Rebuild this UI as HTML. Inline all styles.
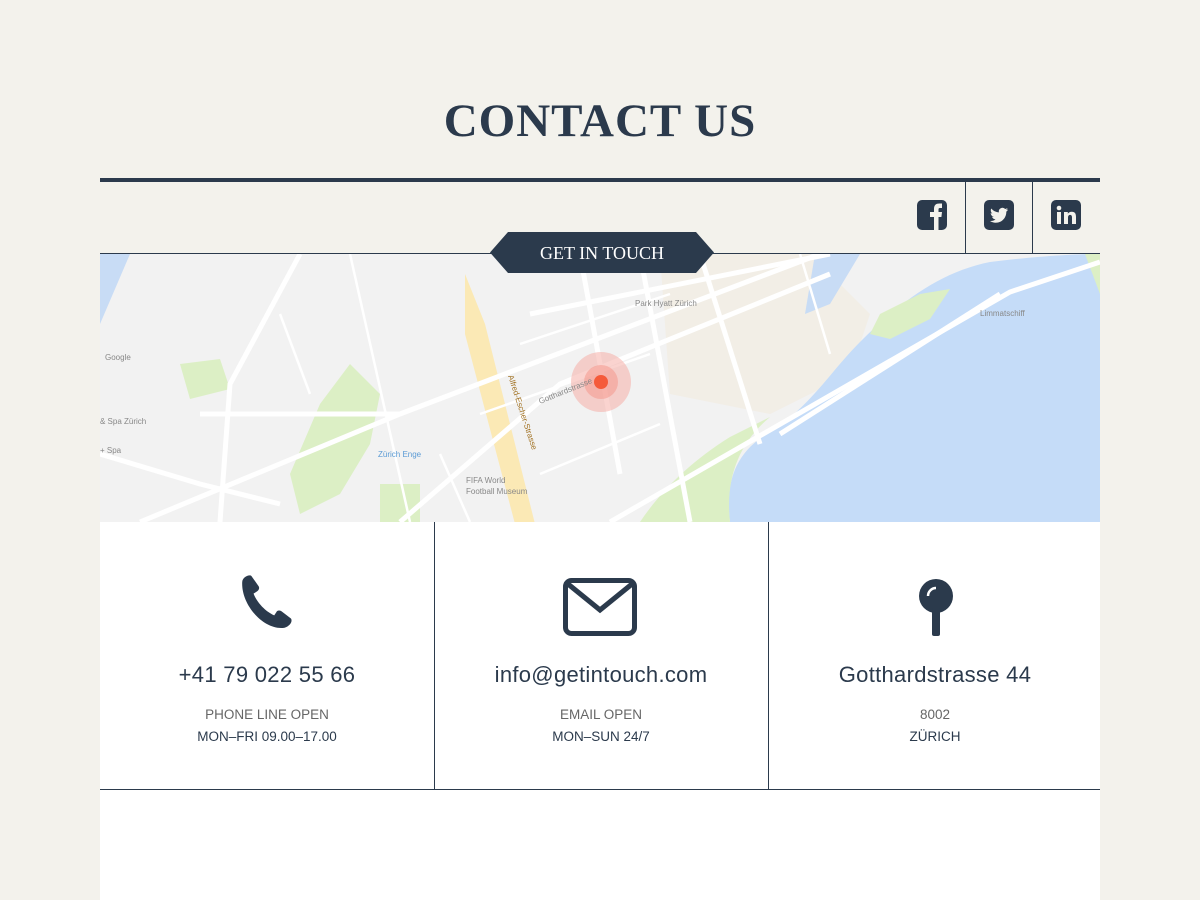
<!DOCTYPE html>
<html><head><meta charset="utf-8"><style>
body{margin:0;width:1200px;height:900px;background:#f3f2ec;font-family:"Liberation Sans",sans-serif;color:#2b3a4c;position:relative;overflow:hidden}
h1{position:absolute;top:94px;left:0;width:1200px;margin:0;text-align:center;font-family:"Liberation Serif",serif;font-size:47px;font-weight:bold;letter-spacing:1px;color:#2b3a4c}
.topline{position:absolute;left:100px;top:178px;width:1000px;height:4px;background:#2b3a4c}
.botline{position:absolute;left:100px;top:253px;width:1000px;height:1px;background:#2b3a4c}
.vd{position:absolute;top:182px;height:71px;width:1px;background:#2b3a4c}
.map{position:absolute;left:100px;top:254px;width:1000px;height:268px;overflow:hidden}
.panel{position:absolute;left:100px;top:522px;width:1000px;height:378px;background:#fff}
.col{position:absolute;top:0;width:334px;height:268px;text-align:center}
.big{position:absolute;top:140px;width:100%;font-size:22px;letter-spacing:.3px}
.s1{position:absolute;top:185px;width:100%;font-size:13.5px;color:#666}
.s2{position:absolute;top:207px;width:100%;font-size:13.5px;color:#2b3a4c}
</style></head><body>
<h1>CONTACT US</h1>
<div class="topline"></div>
<div class="vd" style="left:965px"></div><div class="vd" style="left:1032px"></div>
<svg style="position:absolute;left:917px;top:200px" width="30" height="30" viewBox="0 0 30 30"><rect width="30" height="30" rx="5" fill="#2b3a4c"/><path d="M17 30V17h-4v-5h4V9c0-4 2-5.5 5.5-5.5H25v4.5h-2c-1.2 0-1.5.6-1.5 1.6V12H25l-.6 5h-2.9v13z" fill="#f3f2ec"/></svg>
<svg style="position:absolute;left:984px;top:200px" width="30" height="30" viewBox="0 0 30 30"><rect width="30" height="30" rx="5" fill="#2b3a4c"/><path d="M24 9.5c-.7.3-1.4.5-2.1.6.8-.5 1.3-1.2 1.6-2-.7.4-1.5.7-2.3.9a3.7 3.7 0 0 0-6.3 3.4c-3-.2-5.7-1.6-7.6-3.9-1 1.7-.5 3.9 1.1 5-.6 0-1.2-.2-1.7-.5 0 1.8 1.3 3.3 3 3.7-.5.2-1.1.2-1.7.1.5 1.5 1.9 2.5 3.5 2.6A7.5 7.5 0 0 1 6 21c1.7 1.1 3.7 1.7 5.7 1.7 6.9 0 10.8-5.8 10.6-11.1.7-.5 1.3-1.2 1.7-1.9z" fill="#f3f2ec"/></svg>
<svg style="position:absolute;left:1051px;top:200px" width="30" height="30" viewBox="0 0 30 30"><rect width="30" height="30" rx="5" fill="#2b3a4c"/><rect x="6" y="12" width="4" height="12" fill="#f3f2ec"/><circle cx="8" cy="8" r="2.3" fill="#f3f2ec"/><path d="M13 12h3.8v1.8c.7-1.2 2-2.1 4-2.1 3 0 4.2 1.8 4.2 5V24h-4v-6.5c0-1.6-.5-2.6-1.9-2.6-1.4 0-2.1 1-2.1 2.6V24h-4z" fill="#f3f2ec"/></svg>
<div class="map"><svg width="1000" height="268" viewBox="0 0 1000 268">
<rect width="1000" height="268" fill="#f2f2f2"/>
<path d="M560 0h150l60 60-20 60-80 40-100-20z" fill="#f1ece2" opacity=".8"/>
<path d="M0 0h30L0 70z" fill="#c8dcf5"/>
<path d="M715 0h45l-30 50-25 10z" fill="#c8dcf5"/>
<path d="M1000 0V268H630c-5-40 5-70 40-90 40-25 60-60 90-90 40-40 80-70 130-80 40-5 80-8 110-8z" fill="#c5dcf8"/>
<path d="M540 268c20-30 50-60 90-85l40-20c-30 25-45 60-40 105z" fill="#dcefc5"/>
<path d="M780 60l40-20 30-5-20 30-40 20-20-5z" fill="#dcefc5"/>
<path d="M220 150l30-40 30 30-10 50-30 50-40 20-10-40z" fill="#dcefc5"/>
<path d="M80 110l40-5 10 30-40 10z" fill="#dcefc5"/>
<path d="M280 230h40v38h-40z" fill="#dcefc5"/>
<path d="M985 0h15v40z" fill="#dcefc5"/>
<path d="M365 20l20 50 50 200h-20L365 80z" fill="#fbe9b5"/>
<g stroke="#fff" fill="none" stroke-width="5">
<path d="M120 268L130 130 200 0"/><path d="M100 160h200"/><path d="M40 268L300 160 720 0"/><path d="M300 268L460 130 730 20"/>
<path d="M540 0l50 268"/><path d="M480 0l40 220"/><path d="M600 0l60 190"/><path d="M430 60h0l300-60"/>
<path d="M510 268l400-230 90-30"/><path d="M680 180l220-140"/><path d="M0 200l100 30 80 20"/>
</g>
<g stroke="#fff" fill="none" stroke-width="2.5">
<path d="M380 160l170-60"/><path d="M420 90l150-50"/><path d="M440 220l120-50"/><path d="M250 0l60 268"/><path d="M340 200l30 68"/><path d="M180 60l30 80"/><path d="M700 0l30 100"/>
</g>
<circle cx="501" cy="128" r="30" fill="#f5a8a0" opacity=".5"/><circle cx="501" cy="128" r="17" fill="#f39488" opacity=".5"/><circle cx="501" cy="128" r="7" fill="#f55a3a"/>
<g font-family="Liberation Sans" font-size="8" fill="#888">
<text x="535" y="52">Park Hyatt Zürich</text><text x="880" y="62">Limmatschiff</text><text x="5" y="106">Google</text><text x="0" y="170">&amp; Spa Zürich</text><text x="0" y="199">+ Spa</text><text x="366" y="229">FIFA World</text><text x="366" y="240">Football Museum</text><text x="278" y="203" fill="#5b9bd5">Zürich Enge</text>
<text x="440" y="150" transform="rotate(-22 440 150)">Gotthardstrasse</text>
<text x="408" y="122" transform="rotate(72 408 122)" fill="#a07020">Alfred-Escher-Strasse</text>
</g>
</svg></div>
<div class="botline"></div>
<svg style="position:absolute;left:490px;top:232px" width="224" height="41"><path d="M18 0H206L224 20.5 206 41H18L0 20.5z" fill="#2b3a4c"/><text x="112" y="27" text-anchor="middle" font-family="Liberation Serif" font-size="18" fill="#fff">GET IN TOUCH</text></svg>
<div class="panel">
<div class="col" style="left:0">
<svg style="position:absolute;left:136px;top:52px" width="62" height="62" viewBox="0 0 60 60"><path d="M6 8c0-5 7-8 9-6l7 10c1 2 0 4-2 5l-3 2c3 8 11 17 20 21l2-3c1-2 3-2 5-1l9 7c2 2 0 7-6 9-20 3-42-22-41-44z" fill="#2b3a4c"/></svg>
<div class="big">+41 79 022 55 66</div><div class="s1">PHONE LINE OPEN</div><div class="s2">MON–FRI 09.00–17.00</div></div>
<div style="position:absolute;left:334px;top:0;width:1px;height:268px;background:#2b3a4c"></div>
<div class="col" style="left:334px">
<svg style="position:absolute;left:129px;top:56px" width="74" height="58"><rect x="2.5" y="2.5" width="69" height="53" rx="6" fill="none" stroke="#2b3a4c" stroke-width="5"/><path d="M5 6l32 26 32-26" fill="none" stroke="#2b3a4c" stroke-width="5"/></svg>
<div class="big">info@getintouch.com</div><div class="s1">EMAIL OPEN</div><div class="s2">MON–SUN 24/7</div></div>
<div style="position:absolute;left:668px;top:0;width:1px;height:268px;background:#2b3a4c"></div>
<div class="col" style="left:668px">
<svg style="position:absolute;left:150px;top:56px" width="36" height="60"><circle cx="18" cy="18" r="17" fill="#2b3a4c"/><rect x="14" y="30" width="8" height="28" rx="2" fill="#2b3a4c"/><path d="M10 18a8 8 0 0 1 8-8" stroke="#fff" stroke-width="2.5" fill="none"/></svg>
<div class="big">Gotthardstrasse 44</div><div class="s1">8002</div><div class="s2">ZÜRICH</div></div>
<div style="position:absolute;left:0;top:267px;width:1000px;height:1px;background:#2b3a4c"></div>
</div>
</body></html>
